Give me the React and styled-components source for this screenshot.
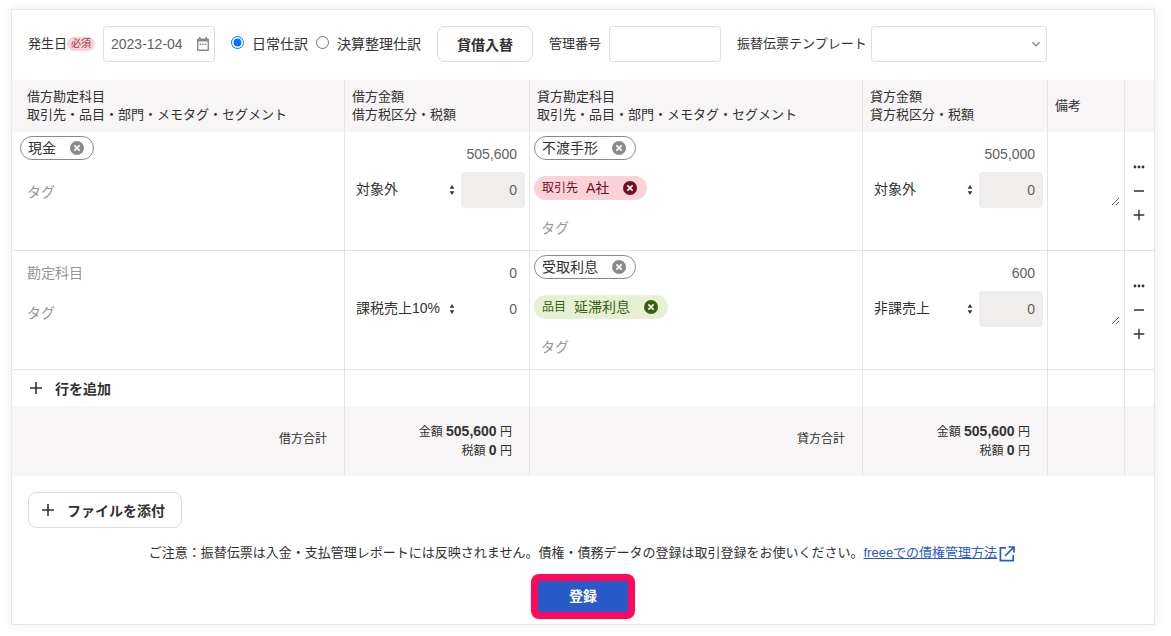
import React from "react";
import styled, { createGlobalStyle, css } from "styled-components";

const color = {
  text: "#323232",
  sub: "#5f5f5f",
  placeholder: "#969696",
  line: "#e6e4e4",
  band: "#f7f5f5",
  field: "#dfded2",
  link: "#285ac8",
};

const GlobalStyle = createGlobalStyle`
  *, *::before, *::after { box-sizing: border-box; }
  body {
    margin: 0;
    background: #fff;
    color: ${color.text};
    font-family: "Liberation Sans", "Noto Sans CJK JP", sans-serif;
    font-size: 13px;
    line-height: 18px;
  }
  button, input, select, textarea { font-family: inherit; color: inherit; margin: 0; }
`;

const Page = styled.main`
  padding: 9px 16px 11px 11px;
`;

const Card = styled.form`
  background: #fff;
  border: 1px solid #e9e7e7;
  box-shadow: 0 0 12px rgba(0, 0, 0, 0.08);
`;

/* Toolbar */

const Toolbar = styled.div`
  display: flex;
  flex-wrap: wrap;
  align-items: center;
  gap: 16px;
  padding: 16px 16px 18px;
`;

const Field = styled.div`
  display: flex;
  align-items: center;
  gap: ${(p) => p.$gap || 8}px;
`;

const FieldLabel = styled.label`
  display: flex;
  align-items: center;
  white-space: nowrap;
`;

const Required = styled.span`
  padding: 0 4px;
  border-radius: 8px;
  background: #fad2d7;
  color: #96414b;
  font-size: 10px;
  line-height: 14px;
`;

const Control = styled.span`
  position: relative;
  display: block;
  width: ${(p) => p.$width || 112}px;

  > svg {
    position: absolute;
    top: 50%;
    right: 5px;
    transform: translateY(-50%);
    pointer-events: none;
  }
`;

const fieldBox = css`
  width: 100%;
  height: 36px;
  padding: 0 7px;
  border: 1px solid ${color.field};
  border-radius: 4px;
  background: #fff;
  color: ${color.sub};
  font-size: 14px;
`;

const TextInput = styled.input`
  ${fieldBox}
`;

const TemplateSelect = styled.select`
  ${fieldBox}
  appearance: none;
`;

const RadioGroup = styled.div`
  display: flex;
  gap: 8px;
`;

const RadioLabel = styled.label`
  display: flex;
  align-items: baseline;
  gap: 8px;
  font-size: 14px;
  white-space: nowrap;

  input { width: 13px; height: 13px; }
`;

const OutlineButton = styled.button`
  display: flex;
  align-items: center;
  gap: 11px;
  height: 36px;
  padding: 0 ${(p) => (p.$icon ? "16px 0 11px" : "19px")};
  border: 1px solid #dcdcdc;
  border-radius: 8px;
  background: #fff;
  font-size: 14px;
  font-weight: 700;
  white-space: nowrap;
`;

/* Journal table */

const Table = styled.table`
  width: 100%;
  table-layout: fixed;
  border-collapse: separate;
  border-spacing: 0;

  th, td { padding: 0; text-align: left; font-weight: 400; }
  th:not(:last-child), td:not(:last-child) { border-right: 1px solid ${color.line}; }
`;

const Col = styled.col`
  width: ${(p) => (p.$width ? `${p.$width}px` : "auto")};
`;

const HeadRow = styled.tr`
  height: 52px;
  background: ${color.band};

  && > th { padding: 0 0 0 7px; }
  && > th:first-child { padding-left: 15px; }
`;

const EntryRow = styled.tr`
  && > td {
    height: 119px;
    border-bottom: 1px solid ${color.line};
    vertical-align: top;
  }
`;

const AddRow = styled.tr`
  height: 36px;
`;

const TotalRow = styled.tr`
  height: 70px;
  background: ${color.band};
  font-size: 12px;

  && > th { padding: 0 17px 4px 0; text-align: right; }
  && > td { padding: 0 17px 0 0; text-align: right; }
  b { font-size: 14px; }
`;

const AccountCell = styled.div`
  display: flex;
  flex-direction: column;
  align-items: flex-start;
  padding: 4px 4px 4px ${(p) => (p.$first ? 8 : 4)}px;
`;

const chipBox = css`
  display: flex;
  align-items: center;
  height: 24px;
  border-radius: 12px;
  font-size: 14px;
  white-space: nowrap;
`;

const AccountChip = styled.span`
  ${chipBox}
  margin-bottom: 14px;
  padding: 0 9px 0 7px;
  border: 1px solid #8c8989;
`;

const tones = {
  red: { bg: "#fad2d7", fg: "#6e0f1e" },
  green: { bg: "#e6f0d2", fg: "#375f14" },
};

const TagChip = styled.span`
  ${chipBox}
  margin: 2px 0 10px;
  padding: 0 10px 0 8px;
  background: ${(p) => tones[p.$tone].bg};
  color: ${(p) => tones[p.$tone].fg};

  small { margin-right: 8px; font-size: 12px; }
`;

const RemoveButton = styled.button`
  display: flex;
  && { margin-left: 14px; }
  padding: 0;
  border: 0;
  background: none;
  && { color: ${(p) => (p.$tone ? tones[p.$tone].fg : "#8c8989")}; }
`;

const CellInput = styled.input`
  width: 100%;
  height: 36px;
  && { margin-bottom: ${(p) => (p.$spaced ? 4 : 0)}px; }
  padding: 0 7px;
  border: 0;
  background: none;
  font-size: 14px;

  &::placeholder { color: ${color.placeholder}; opacity: 1; }
`;

const AmountCell = styled.div`
  padding: 4px;
`;

const NumberInput = styled.input`
  display: block;
  width: ${(p) => (p.$tax ? "64px" : "100%")};
  height: 36px;
  padding: 0 8px;
  border: 0;
  border-radius: 4px;
  background: ${(p) => (p.disabled ? "#f0eeed" : "transparent")};
  && { color: ${color.sub}; }
  font-size: 14px;
  text-align: right;
`;

const TaxLine = styled.div`
  display: flex;
  gap: 4px;
`;

const TaxControl = styled.span`
  position: relative;
  flex: 1;
  min-width: 0;

  > svg {
    position: absolute;
    top: 13px;
    right: 2px;
    pointer-events: none;
  }
`;

const TaxSelect = styled.select`
  width: 100%;
  height: 36px;
  padding: 0 7px 2px;
  border: 0;
  background: none;
  font-size: 14px;
  appearance: none;
`;

const Memo = styled.textarea`
  display: block;
  width: calc(100% - 8px);
  height: 70px;
  && { margin: 4px; }
  padding: 4px;
  border: 0;
  background: none;
  resize: both;
`;

const RowActions = styled.div`
  display: flex;
  flex-direction: column;
  align-items: flex-start;
  padding: 23px 0 0 2px;
`;

const IconButton = styled.button`
  display: flex;
  align-items: center;
  justify-content: center;
  width: 24px;
  height: 24px;
  padding: 0;
  border: 0;
  background: none;
`;

const AddRowButton = styled.button`
  display: flex;
  align-items: center;
  gap: 11px;
  height: 36px;
  padding: 0 16px;
  border: 0;
  background: none;
  font-size: 14px;
  font-weight: 700;
`;

/* Footer */

const Footer = styled.div`
  padding: 16px 16px 5px;
`;

const Notice = styled.p`
  display: flex;
  justify-content: center;
  margin: 16px 2px 12px 0;
`;

const HelpLink = styled.a`
  display: inline-flex;
  align-items: center;
  gap: 2px;
  height: 18px;
  color: ${color.link};
  text-decoration: none;
  white-space: nowrap;

  span { text-decoration: underline; }
  svg { margin-top: 2px; }
`;

const SubmitButton = styled.button`
  display: block;
  width: 104px;
  height: 45px;
  && { margin: 0 auto; }
  padding: 0 0 3px;
  border: 7px solid #ff0a5a;
  border-radius: 8px;
  background: ${color.link};
  && { color: #fff; }
  font-size: 14px;
  font-weight: 700;
`;

/* Icons */

const PlusIcon = ({ size = 16 }) => (
  <svg width={size} height={size} viewBox="0 0 16 16" aria-hidden="true">
    <path d="M8 2v12M2 8h12" fill="none" stroke="#323232" strokeWidth="1.6" />
  </svg>
);

const MinusIcon = () => (
  <svg width="12" height="12" viewBox="0 0 12 12" aria-hidden="true">
    <path d="M1 6h10" fill="none" stroke="#323232" strokeWidth="1.5" />
  </svg>
);

const DotsIcon = () => (
  <svg width="12" height="12" viewBox="0 0 12 12" fill="#323232" aria-hidden="true">
    <circle cx="2" cy="6" r="1.4" />
    <circle cx="6" cy="6" r="1.4" />
    <circle cx="10" cy="6" r="1.4" />
  </svg>
);

const RemoveIcon = () => (
  <svg width="14" height="14" viewBox="0 0 14 14" aria-hidden="true">
    <circle cx="7" cy="7" r="7" fill="currentColor" />
    <path d="M4.4 4.4l5.2 5.2M9.6 4.4l-5.2 5.2" stroke="#fff" strokeWidth="1.6" />
  </svg>
);

const CalendarIcon = () => (
  <svg width="14" height="14" viewBox="0 0 14 14" aria-hidden="true">
    <path
      fill="#8c8989"
      fillRule="evenodd"
      d="M3 0h1.6v1.4h4.8V0H11v1.4h1q1 0 1 1V13q0 1-1 1H2q-1 0-1-1V2.4q0-1 1-1h1zM2.4 4.6v8h9.2v-8z"
    />
    <path fill="#8c8989" d="M3.6 6.4h1.6V8H3.6zM6.2 6.4h1.6V8H6.2zM8.8 6.4h1.6V8H8.8z" />
  </svg>
);

const ChevronIcon = () => (
  <svg width="12" height="12" viewBox="0 0 12 12" aria-hidden="true">
    <path d="M2.5 4.3L6 7.800l3.5-3.5" fill="none" stroke="#8c8989" strokeWidth="1.5" />
  </svg>
);

const SortIcon = () => (
  <svg width="6" height="10" viewBox="0 0 6 10" fill="#323232" aria-hidden="true">
    <path d="M3 0l2.3 3.8H.7zM3 10L.7 6.2h4.6z" />
  </svg>
);

const ExternalIcon = () => (
  <svg width="16" height="16" viewBox="0 0 16 16" aria-hidden="true">
    <path
      d="M7 1.8H1.4v12.8h12.8V9M9.5 1h5.500v5.500M14.6 1.4L6 10"
      fill="none"
      stroke="#285ac8"
      strokeWidth="1.7"
    />
  </svg>
);

/* Composite parts */

function Account({ first, side, account, tag }) {
  return (
    <AccountCell $first={first}>
      {account ? (
        <AccountChip>
          {account}
          <RemoveButton type="button" aria-label={`${account}を削除`}>
            <RemoveIcon />
          </RemoveButton>
        </AccountChip>
      ) : (
        <CellInput $spaced placeholder="勘定科目" aria-label={`${side}勘定科目`} />
      )}
      {tag && (
        <TagChip $tone={tag.tone}>
          <small>{tag.kind}</small>
          {tag.name}
          <RemoveButton type="button" $tone={tag.tone} aria-label={`${tag.name}を削除`}>
            <RemoveIcon />
          </RemoveButton>
        </TagChip>
      )}
      <CellInput placeholder="タグ" aria-label={`${side}タグ`} />
    </AccountCell>
  );
}

function Amount({ side, amount, taxType, taxable }) {
  return (
    <AmountCell>
      <NumberInput defaultValue={amount} aria-label={`${side}金額`} />
      <TaxLine>
        <TaxControl>
          <TaxSelect aria-label={`${side}税区分`}>
            <option>{taxType}</option>
          </TaxSelect>
          <SortIcon />
        </TaxControl>
        <NumberInput $tax defaultValue="0" disabled={!taxable} aria-label={`${side}税額`} />
      </TaxLine>
    </AmountCell>
  );
}

const entries = [
  {
    debit: { account: "現金", amount: "505,600", taxType: "対象外" },
    credit: {
      account: "不渡手形",
      tag: { kind: "取引先", name: "A社", tone: "red" },
      amount: "505,000",
      taxType: "対象外",
    },
  },
  {
    debit: { amount: "0", taxType: "課税売上10%", taxable: true },
    credit: {
      account: "受取利息",
      tag: { kind: "品目", name: "延滞利息", tone: "green" },
      amount: "600",
      taxType: "非課売上",
    },
  },
];

function Entry({ debit, credit }) {
  return (
    <EntryRow>
      <td>
        <Account first side="借方" account={debit.account} tag={debit.tag} />
      </td>
      <td>
        <Amount side="借方" {...debit} />
      </td>
      <td>
        <Account side="貸方" account={credit.account} tag={credit.tag} />
      </td>
      <td>
        <Amount side="貸方" {...credit} />
      </td>
      <td>
        <Memo aria-label="備考" />
      </td>
      <td>
        <RowActions>
          <IconButton type="button" aria-label="メニュー">
            <DotsIcon />
          </IconButton>
          <IconButton type="button" aria-label="行を削除">
            <MinusIcon />
          </IconButton>
          <IconButton type="button" aria-label="行を挿入">
            <PlusIcon size={14} />
          </IconButton>
        </RowActions>
      </td>
    </EntryRow>
  );
}

const Total = () => (
  <td>
    金額 <b>505,600</b> 円
    <br />
    税額 <b>0</b> 円
  </td>
);

export default function App() {
  return (
    <>
      <GlobalStyle />
      <Page>
        <Card onSubmit={(e) => e.preventDefault()}>
          <Toolbar>
            <Field>
              <FieldLabel htmlFor="date">
                発生日<Required>必須</Required>
              </FieldLabel>
              <Control>
                <TextInput id="date" defaultValue="2023-12-04" />
                <CalendarIcon />
              </Control>
            </Field>
            <RadioGroup>
              <RadioLabel>
                <input type="radio" name="kind" defaultChecked />
                日常仕訳
              </RadioLabel>
              <RadioLabel>
                <input type="radio" name="kind" />
                決算整理仕訳
              </RadioLabel>
            </RadioGroup>
            <OutlineButton type="button">貸借入替</OutlineButton>
            <Field>
              <FieldLabel htmlFor="number">管理番号</FieldLabel>
              <Control>
                <TextInput id="number" />
              </Control>
            </Field>
            <Field $gap={4}>
              <FieldLabel htmlFor="template">振替伝票テンプレート</FieldLabel>
              <Control $width={176}>
                <TemplateSelect id="template">
                  <option></option>
                </TemplateSelect>
                <ChevronIcon />
              </Control>
            </Field>
          </Toolbar>

          <Table>
            <colgroup>
              <Col />
              <Col $width={185} />
              <Col />
              <Col $width={185} />
              <Col $width={77} />
              <Col $width={29} />
            </colgroup>
            <thead>
              <HeadRow>
                <th>
                  借方勘定科目
                  <br />
                  取引先・品目・部門・メモタグ・セグメント
                </th>
                <th>
                  借方金額
                  <br />
                  借方税区分・税額
                </th>
                <th>
                  貸方勘定科目
                  <br />
                  取引先・品目・部門・メモタグ・セグメント
                </th>
                <th>
                  貸方金額
                  <br />
                  貸方税区分・税額
                </th>
                <th>備考</th>
                <th />
              </HeadRow>
            </thead>
            <tbody>
              {entries.map((entry, i) => (
                <Entry key={i} {...entry} />
              ))}
              <AddRow>
                <td>
                  <AddRowButton type="button">
                    <PlusIcon />
                    行を追加
                  </AddRowButton>
                </td>
                <td />
                <td />
                <td />
                <td />
                <td />
              </AddRow>
            </tbody>
            <tfoot>
              <TotalRow>
                <th>借方合計</th>
                <Total />
                <th>貸方合計</th>
                <Total />
                <td />
                <td />
              </TotalRow>
            </tfoot>
          </Table>

          <Footer>
            <OutlineButton type="button" $icon>
              <PlusIcon />
              ファイルを添付
            </OutlineButton>
            <Notice>
              ご注意：振替伝票は入金・支払管理レポートには反映されません。債権・債務データの登録は取引登録をお使いください。
              <HelpLink href="#receivables">
                <span>freeeでの債権管理方法</span>
                <ExternalIcon />
              </HelpLink>
            </Notice>
            <SubmitButton type="submit">登録</SubmitButton>
          </Footer>
        </Card>
      </Page>
    </>
  );
}
